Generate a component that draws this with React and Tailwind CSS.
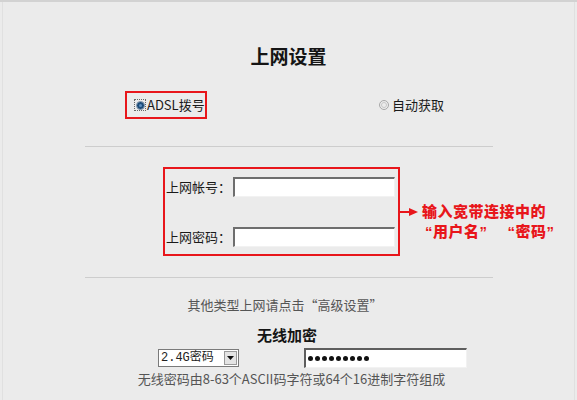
export default function App() {
  const cjk = { fontFamily: '"Noto Sans CJK SC", "Noto Sans", sans-serif' };
  return (
    <div
      className="w-[577px] h-[400px] overflow-hidden bg-[#ebebeb] border-t-2 border-[#d2d2d2]"
      style={cjk}
    >
      <div className="h-full mx-[2px] border-x border-[#e0e0e0] flex flex-col pt-[42px]">
        {/* Title */}
        <div className="h-[24px] leading-[24px] text-[19px] font-bold text-[#151515] text-center">
          上网设置
        </div>

        {/* Radio row */}
        <div className="mt-[23px] flex items-center">
          <div className="ml-[122px] w-[82px] h-[28px] border-2 border-[#e8161b] flex items-center pl-[7px]">
            <span className="w-[12px] h-[12px] border border-dotted border-[#666] flex items-center justify-center">
              <span className="w-[9px] h-[9px] rounded-full bg-[#1d4d7a] border border-[#8fa0b2] flex items-center justify-center">
                <span className="w-[3px] h-[3px] rounded-full bg-[#5f8fc0]" />
              </span>
            </span>
            <span className="ml-[1px] text-[13px] leading-[16px] text-[#1a1a1a]">ADSL拨号</span>
          </div>
          <div className="ml-[172px] flex items-center">
            <span className="w-[10px] h-[10px] rounded-full border border-[#a8a8a8] bg-[#ececec] flex items-center justify-center">
              <span className="w-[6px] h-[6px] rounded-full border border-[#c8c8c8]" />
            </span>
            <span className="ml-[3px] text-[13px] leading-[16px] text-[#1a1a1a]">自动获取</span>
          </div>
        </div>

        {/* Divider */}
        <div className="mt-[27px] ml-[82px] w-[408px] h-px bg-[#cdcdcd]" />

        {/* Account box */}
        <div className="mt-[20px] flex items-start">
          <div className="ml-[160px] w-[237px] h-[89px] border-2 border-[#e8161b] flex flex-col pl-[1px] pt-[8px]">
            <div className="flex items-center h-[20px]">
              <span className="w-[67px] text-[13px] text-[#1a1a1a] leading-[16px]">上网帐号：</span>
              <span className="w-[162px] h-[20px] bg-white border-t-2 border-l-2 border-[#6e6e6e] border-r border-b border-r-[#f2f2f2] border-b-[#f2f2f2]" />
            </div>
            <div className="flex items-center h-[20px] mt-[30px]">
              <span className="w-[67px] text-[13px] text-[#1a1a1a] leading-[16px]">上网密码：</span>
              <span className="w-[162px] h-[20px] bg-white border-t-2 border-l-2 border-[#6e6e6e] border-r border-b border-r-[#f2f2f2] border-b-[#f2f2f2]" />
            </div>
          </div>
          <svg width="18" height="10" viewBox="0 0 18 10" className="mt-[40px]">
            <line x1="0" y1="5" x2="10" y2="5" stroke="#e8161b" strokeWidth="2" />
            <polygon points="9,1 18,5 9,9" fill="#e8161b" />
          </svg>
          <div
            className="ml-[4px] mt-[35px] text-[15px] leading-[20px] font-extrabold text-[#e8161b] tracking-[0.5px]"
            style={{ fontFamily: '"Liberation Sans", "Noto Sans CJK SC", sans-serif' }}
          >
            <div>输入宽带连接中的</div>
            <div className="flex pl-[3px]">
              <span>“用户名”</span>
              <span className="ml-[20px]">“密码”</span>
            </div>
          </div>
        </div>

        {/* Divider 2 */}
        <div className="mt-[21px] ml-[82px] w-[408px] h-px bg-[#cdcdcd]" />

        <div className="mt-[18px] h-[18px] leading-[18px] text-[13px] text-[#555] text-center pr-[7px]">
          其他类型上网请点击“高级设置”
        </div>

        <div className="mt-[11px] h-[20px] leading-[20px] text-[15px] font-bold text-[#151515] text-center pr-[3px]">
          无线加密
        </div>

        {/* Controls */}
        <div className="mt-[3px] flex items-center h-[20px]">
          <div className="ml-[155px] w-[81px] h-[18px] bg-white border border-[#7a7a7a] flex items-center">
            <span
              className="flex-1 pl-[2px] text-[12px] leading-[16px] text-[#222]"
              style={{ fontFamily: '"Liberation Mono", "Noto Sans CJK SC", monospace' }}
            >
              2.4G密码
            </span>
            <span className="w-[13px] h-[14px] mr-[1px] bg-[#e4e4e4] border border-[#9a9a9a] flex items-center justify-center">
              <svg width="7" height="4" viewBox="0 0 7 4">
                <polygon points="0,0 7,0 3.5,4" fill="#111" />
              </svg>
            </span>
          </div>
          <div className="ml-[65px] w-[163px] h-[20px] bg-white border-t-2 border-l-2 border-[#5e5e5e] border-r border-b border-r-[#f2f2f2] border-b-[#f2f2f2] flex items-center pl-[2px] gap-[2px]">
            {Array.from({ length: 9 }).map((_, i) => (
              <span key={i} className="w-[5px] h-[5px] rounded-full bg-[#111]" />
            ))}
          </div>
        </div>

        <div className="mt-[3px] h-[16px] leading-[16px] text-[13px] text-[#555] text-center pl-[6px]">
          无线密码由8-63个ASCII码字符或64个16进制字符组成
        </div>
      </div>
    </div>
  );
}
